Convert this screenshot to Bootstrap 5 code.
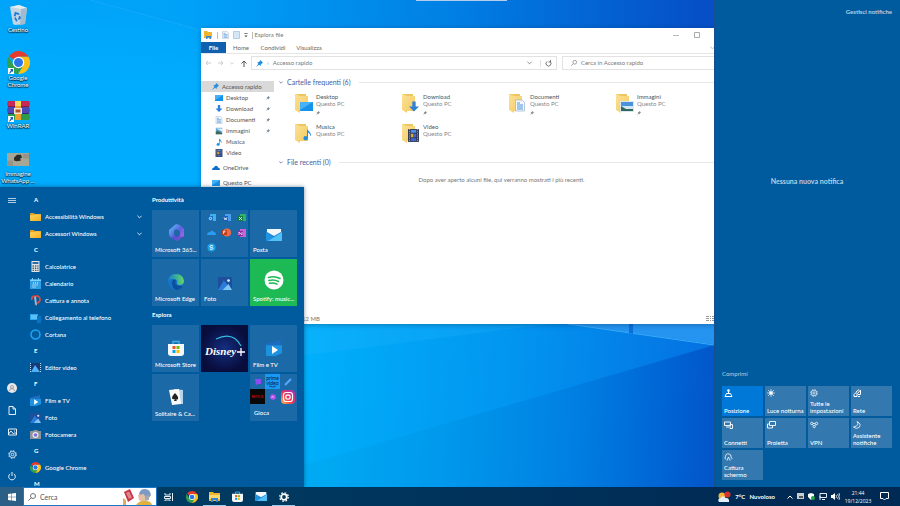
<!DOCTYPE html>
<html lang="it">
<head>
<meta charset="utf-8">
<meta name="viewport" content="width=device-width, initial-scale=1">
<title>Desktop</title>
<link href="https://cdn.jsdelivr.net/npm/bootstrap@5.3.0/dist/css/bootstrap.min.css" rel="stylesheet">
<style>
body{font-family:Lato,"Open Sans",sans-serif;font-size:6px;line-height:8px;color:#fff;background:#0a84e8}
svg{display:block;flex:none}
button,a,input{font:inherit;color:inherit}
button{background:none;border:0;padding:0;display:block}
a{text-decoration:none}
.screen{height:100vh;min-height:320px}
.paper{position:absolute;inset:0;width:100%;height:100%}
.strong{font-weight:700}
.medium{font-weight:500}
/* desktop icons */
.shortcuts{width:36px}
.shortcut{height:48px;padding-top:2px;line-height:7px;text-shadow:0 1px 1px #000,0 0 2px #024}
.pic{height:24px}
/* explorer window */
.explorer{position:absolute;left:201px;right:172px;top:28px;height:296px;background:#fff;color:#777;box-shadow:0 1px 5px #0245}
.titlebar{height:14px;padding-left:3px}
.vr-thin{width:1px;height:7px;background:#bbb}
.winbtn{width:21px}
.ribbon{height:12px;border-bottom:1px solid #e6e6e6;color:#666}
.ribbon button{width:32px}
.ribbon button.filetab{width:25px;background:#1060b0;color:#fff;margin-right:-1px}
.ribbon button.wide{width:40px}
.address{height:18px;padding:2px 0 2px 4px}
.navs{width:46px}
.boxed{border:1px solid #e2e2e2;height:14px}
.findbox{width:166px;margin-left:5px}
.findbox input,.seek input{border:0;background:none;outline:0;min-width:0;padding:0}
.findbox input::placeholder{color:#777;opacity:1}
.tree{width:73px;padding-top:9px;color:#555}
.tree a{height:11px;padding-left:14px;gap:3px}
.tree a.root{padding-left:11px}
.tree a.picked{background:#d9d9d9}
.gap-above{margin-top:4px}
.files{padding:4px 4px 0 5px}
.group{font-size:7px;line-height:12px;color:#4a5c9c}
.rule{height:1px;background:#e8e8e8}
.folders{display:grid;grid-template-columns:repeat(4,107px);grid-auto-rows:30px;padding:5px 0 0 15px;margin-bottom:3px}
.folders button{text-align:left;line-height:7px;color:#888}
.folders b{font-weight:400;color:#48565e}
.status{height:11px;padding:0 14px 0 101px}
/* start menu */
.start{position:absolute;left:0;bottom:0;width:304px;height:300px;background:#005a9e;overflow:hidden;box-shadow:0 0 4px #0248}
.rail{width:24px;padding:8px 0 6px}
.rail button{height:10px}
.rail-low{gap:12px}
.apps{width:122px;padding:5px 4px 0 6px;height:300px;overflow:hidden}
.apps h3{font-size:6px;line-height:16px;margin:0;padding-left:4px;font-weight:700}
.apps button{height:17px;width:100%;gap:4px;text-align:left}
.tiles{padding:9px 0 0 6px}
.tiles h2{font-size:6px;line-height:8px;margin:0;font-weight:700}
.board{display:grid;grid-template-columns:repeat(3,47px);grid-auto-rows:47px;gap:2px;padding:6px 0 5px}
.tile{position:relative;background:#1c69a8;text-align:left;display:flex;flex-direction:column;align-items:center;justify-content:flex-end;padding:0 2px 3px 3px;white-space:nowrap}
.tile span{width:100%;display:block;overflow:hidden}
.tile .art{margin-bottom:5px}
.tile.green{background:#1db954}
.minis{display:grid;grid-template-columns:repeat(3,15px);grid-auto-rows:15px;justify-items:center;align-items:center;width:100%}
/* notification panel */
.centre{position:absolute;right:0;top:0;bottom:0;width:186px;background:#005a9e;border-left:1px solid #16508c;padding:8px 8px 7px 7px;color:#b9d0e4}
.nothing{padding-bottom:24px}
.nothing p{font-size:7px}
.quick{display:grid;grid-template-columns:repeat(4,1fr);grid-auto-rows:30px;gap:2px;color:#fff}
.quick button{background:#3378af;text-align:left;display:flex;flex-direction:column;justify-content:space-between;padding:3px 0 2px 2px;line-height:7px}
.quick button.on{background:#0078d7}
/* taskbar */
.bar{height:19px;background:linear-gradient(90deg,#003a60 25%,#002a54 85%)}
.winkey{width:23px;background:#2c5f85}
.seek{width:134px;background:#fff;border:1px solid #1d78c8;color:#666;font-size:7px}
.seek input::placeholder{color:#555;opacity:1}
.task{width:23px}
.task.open{box-shadow:inset 0 -1px #9cc9ee}
.tray{gap:4px;padding-right:11px}
.clock{width:28px;font-family:"Open Sans",sans-serif;font-size:5px}
.handle{position:absolute;left:46.2%;top:0;width:91px;height:1px;background:#b4cdec}
</style>
<script src="https://cdn.jsdelivr.net/npm/bootstrap@5.3.0/dist/js/bootstrap.bundle.min.js"></script>
</head>
<body class="overflow-hidden">
<svg width="0" height="0" class="position-absolute" aria-hidden="true">
<defs>
<linearGradient id="fg" x2="1" y2="1"><stop stop-color="#ffd75e"/><stop offset="1" stop-color="#f2ae22"/></linearGradient>
<linearGradient id="pg" x2="1" y2="1"><stop stop-color="#fbe296"/><stop offset="1" stop-color="#f3c95f"/></linearGradient>
<linearGradient id="mg" x2="1" y2="1"><stop stop-color="#5ad0f6"/><stop offset=".5" stop-color="#5b62e0"/><stop offset="1" stop-color="#c867d8"/></linearGradient>
<linearGradient id="eg" x2="1" y2="0"><stop stop-color="#1580d0"/><stop offset="1" stop-color="#62d860"/></linearGradient>
<linearGradient id="ig" y1="1" x2="1" y2="0"><stop stop-color="#fec34a"/><stop offset=".45" stop-color="#f0345a"/><stop offset="1" stop-color="#9a36c8"/></linearGradient>
<radialGradient id="dg"><stop stop-color="#142e80"/><stop offset="1" stop-color="#080d3c"/></radialGradient>
<symbol id="chrome" viewBox="0 0 24 24"><path fill="#e33b2e" d="M12 12 2 5.500A12 12 0 0 1 22.400 6H12z"/><path fill="#fbc116" d="M12 6h10.400A12 12 0 0 1 11.500 24L17 15z"/><path fill="#2fa04e" d="M1.600 6A12 12 0 0 0 11.500 24L17 15l-5-3-5.200 3z"/><circle cx="12" cy="12" r="6" fill="#fff"/><circle cx="12" cy="12" r="4.700" fill="#2b75e8"/></symbol>
<symbol id="folder" viewBox="0 0 12 10"><path fill="#e8a21c" d="M0 1h4l1.500 1.500H12V9H0z"/><path fill="url(#fg)" d="M0 3.500h4.500L6 2.500h6V10H0z"/></symbol>
<symbol id="bigfolder" viewBox="0 0 20 20"><path fill="#eec660" d="M1 1h11v15H1z"/><path fill="url(#pg)" d="M1 1l5 2h8v15H6v2l-5-3z"/></symbol>
<symbol id="pin" viewBox="0 0 8 8"><path fill="currentColor" d="M5 0l3 3-1 .6L5.500 5l-.2 1.800L3.600 5.300 0 8l2.700-3.600L1.200 2.800 3 2.500 4.500 1z"/></symbol>
<symbol id="photo" viewBox="0 0 12 11" preserveAspectRatio="none"><path fill="#1d4f9c" d="M0 0h12v10H0z"/><path fill="#2b7bd8" d="M0 11l5-8 7 8z"/><path fill="#7cc6f6" d="M4 11l5-5 3 5z"/><circle cx="9" cy="3" r="1.200" fill="#cfeaff"/></symbol>
<symbol id="film" viewBox="0 0 12 12"><path fill="#1d6cc0" d="M0 3l11-3v4l-11 3z"/><path fill="#1d92e0" d="M0 4h12v6l-5 2H0z"/><path fill="#fff" d="M4.500 4.500v6L9 7.500z"/></symbol>
<symbol id="cap" viewBox="0 0 10 10"><path fill="#5b9edb" d="M1 1h8v8H1z"/><path fill="#e8f2fa" d="M1 2h8v4L6 4z"/><path fill="#3b6a55" d="M1 6l3-1 5 3v1H1z"/></symbol>
<symbol id="note" viewBox="0 0 10 12"><path fill="#1e8fe0" d="M5 0c0 2 4 3 4 7H8c0-2-1-2.500-2-3v5.500A2.300 2 0 1 1 5 8z"/></symbol>
<symbol id="strip" viewBox="0 0 12 14"><path fill="#2f3550" d="M0 0h12v14H0z"/><path fill="#4b90e8" d="M3 1h6v3H3z"/><path fill="#d7a83c" d="M3 5h3v4H3z"/><path fill="#3e68d0" d="M6 5h3v4H6zM3 10h6v3H3z"/><path stroke="#b9bfd0" stroke-dasharray="1 1" d="M1.500 0v14M10.500 0v14"/></symbol>
<symbol id="doc" viewBox="0 0 10 12"><path fill="#f4f8fc" stroke="#9ab2c8" stroke-width=".7" d="M.5.5h6.500L9.500 3v8.500h-9z"/><path stroke="#4d93d9" d="M2 3.500h3M2 5.500h6M2 7.500h6M2 9.500h6"/></symbol>
<symbol id="down" viewBox="0 0 12 12"><path fill="#2f80d8" d="M4 0h4v6h4l-6 6-6-6h4z"/></symbol>
<symbol id="mon" viewBox="0 0 12 9" preserveAspectRatio="none"><path fill="#1593ea" d="M0 0h12v9H0z"/><path fill="#45b2f8" d="M0 0h12L0 8z"/></symbol>
<symbol id="gear" viewBox="0 0 12 12"><g fill="none" stroke="currentColor"><circle cx="6" cy="6" r="1.700"/><circle cx="6" cy="6" r="4.200"/><circle cx="6" cy="6" r="5.200" stroke-dasharray="2 2.080"/></g></symbol>
<symbol id="bag" viewBox="0 0 16 16"><path fill="none" stroke="#3fb3ee" stroke-width="1.300" d="M5 4V1.500h6V4"/><path fill="#f4f8fb" d="M0 4h16v9q0 3-3 3H3q-3 0-3-3z"/><path fill="#f25022" d="M4.500 6H7.500V9H4.500z"/><path fill="#7fba00" d="M8.500 6h3v3h-3z"/><path fill="#00a4ef" d="M4.500 10h3v3h-3z"/><path fill="#ffb900" d="M8.500 10h3v3h-3z"/></symbol>
<symbol id="mail" viewBox="0 0 16 12"><path fill="#1a7fd0" d="M0 2h16v10H0z"/><path fill="#f4f8fb" d="M1 0h14v3L8 7 1 3z"/><path fill="#1f93e2" d="M0 12V3l8 5-5 4z"/><path fill="#4fc1f8" d="M16 12V3L2 12z"/></symbol>
<symbol id="glass" viewBox="0 0 8 8"><g fill="none" stroke="currentColor" stroke-width=".9"><circle cx="5" cy="3" r="2.500"/><path d="M3.200 4.800.3 7.700"/></g></symbol>
<symbol id="chev" viewBox="0 0 6 4"><path fill="none" stroke="currentColor" d="M.5.5 3 3 5.500.5"/></symbol>
</defs>
</svg>

<div class="screen d-flex flex-column">
<main class="position-relative flex-grow-1 overflow-hidden">
  <svg class="paper" viewBox="0 0 900 487" preserveAspectRatio="none" aria-hidden="true">
    <defs>
      <linearGradient id="w1"><stop stop-color="#00a4f8"/><stop offset=".2" stop-color="#00a2f8"/><stop offset=".5" stop-color="#0080e4"/><stop offset=".78" stop-color="#064fc6"/></linearGradient>
      <linearGradient id="w2" x2="0" y2="1"><stop stop-color="#00b0ff" stop-opacity="0"/><stop offset=".5" stop-color="#00acfe"/></linearGradient>
      <linearGradient id="w3" gradientUnits="userSpaceOnUse" x1="304" y1="340" x2="714" y2="370"><stop stop-color="#00b0fb"/><stop offset=".5" stop-color="#0296f0"/><stop offset="1" stop-color="#0470e2"/></linearGradient>
      <linearGradient id="w4" gradientUnits="userSpaceOnUse" x1="304" y1="430" x2="714" y2="450"><stop stop-color="#00acf4"/><stop offset=".35" stop-color="#0098ec"/><stop offset=".65" stop-color="#0080e2"/><stop offset=".88" stop-color="#0064d4"/><stop offset="1" stop-color="#0355c8"/></linearGradient>
    </defs>
    <path fill="url(#w1)" d="M0 0h900v487H0z"/>
    <path fill="url(#w2)" d="M0 0h90l114 31v160H0z"/>
    <path stroke="#32b2fb" stroke-opacity=".4" d="M90 0l114 31"/>
    <path fill="url(#w3)" d="M300 300h600v187H300z"/>
    <path fill="#2bb9ff" fill-opacity=".2" d="M300 356l250-32H300z"/>
    <path fill="#2494f0" d="M568 324h150v21z"/>
    <path stroke="#39aaf8" d="M568 324l146 21"/>
    <path fill="#0a6fd8" d="M629 324h4v10l-4-1z"/>
    <path fill="url(#w4)" d="M300 466l415-121v142H300z"/>
  </svg>
  <div class="handle"></div>

  <div class="shortcuts position-relative text-center">
    <a href="#" class="shortcut d-block"><span class="pic d-flex align-items-center justify-content-center"><svg width="19" height="21" viewBox="0 0 19 21"><path fill="#c3d5e2" d="M1 3l9-2 8 3-2 16-10 1-2-1z"/><path fill="#e2edf4" d="M1 3l9-2 8 3-6 1z"/><path fill="#a0bbd0" d="M12 5l6-1-2 16-5 1z"/><path fill="none" stroke="#1f7ad4" stroke-width="1.800" stroke-dasharray="4 1.500" d="M6.500 9l3 1 1.500 4-3.500 2.500-2-3.500z"/></svg></span>Cestino</a>
    <a href="#" class="shortcut d-block"><span class="pic d-flex align-items-center justify-content-center position-relative"><svg width="23" height="23"><use href="#chrome"/></svg><svg class="position-absolute bottom-0 start-0 ms-2" width="6" height="6" viewBox="0 0 6 6"><path fill="#fff" d="M0 0h6v6H0z"/><path fill="#1a5fb4" d="M2 1h3v3L4 3.200 2 5.500H1L3 2z"/></svg></span>Google Chrome</a>
    <a href="#" class="shortcut d-block"><span class="pic d-flex align-items-center justify-content-center position-relative"><svg width="23" height="19" viewBox="0 0 23 19"><path fill="#c42a55" d="M1 0h21l1 3-1 3H1L0 3z"/><path fill="#4b49b8" d="M1 6h21l1 3-1 4H1L0 9z"/><path fill="#2c9c4a" d="M1 13h21l1 3-1 3H1l-1-3z"/><path fill="#8c1b3c" d="M1 5h21v1H1z"/><path fill="#2f2c80" d="M1 12h21v1H1z"/><path fill="#f0a02c" d="M8 0h6v19H8z"/><path fill="#f8d860" d="M8 0h6v5H8z"/><path fill="#f4e4cc" d="M7 7h8v6H7z"/><path fill="#b0522c" d="M8.500 8.500h5v3h-5z"/></svg><svg class="position-absolute bottom-0 start-0 ms-2" width="6" height="6" viewBox="0 0 6 6"><path fill="#fff" d="M0 0h6v6H0z"/><path fill="#1a5fb4" d="M2 1h3v3L4 3.200 2 5.500H1L3 2z"/></svg></span>WinRAR</a>
    <a href="#" class="shortcut d-block"><span class="pic d-flex align-items-end justify-content-center pb-1"><svg width="22" height="13" viewBox="0 0 22 14" preserveAspectRatio="none"><path fill="#a7a594" d="M0 0h22v14H0z"/><path fill="#96948a" d="M0 8h6v6H0zM16 1h6v5h-6z"/><path fill="#2a2a28" d="M7 5l3-3 4 0 1 3-2 1 1 2-4 1-3-1z"/></svg></span>Immagine WhatsApp&nbsp;...</a>
  </div>

  <section class="explorer d-flex flex-column">
    <div class="titlebar d-flex align-items-center">
      <svg width="9" height="8" viewBox="0 0 9 8"><path fill="#f0b52c" d="M0 0h3l1 1h4v6H0z"/><path fill="#3584d8" d="M2 5h5v3H5.500V6.500h-2V8H2z"/></svg>
      <span class="vr-thin ms-1 me-1"></span>
      <svg width="7" height="8" class="me-1"><use href="#doc"/></svg>
      <svg width="7" height="8" viewBox="0 0 7 8" class="me-1"><path fill="#d5e6f6" stroke="#9bbbd8" stroke-width=".7" d="M.5.500h6v7h-6z"/></svg>
      <svg width="4" height="5" viewBox="0 0 4 6"><path fill="#555" d="M0 0h4v1H0zM0 3h4L2 5z"/></svg>
      <span class="vr-thin ms-1"></span>
      <span class="flex-grow-1">&nbsp;Esplora file</span>
      <button class="winbtn" aria-label="Riduci"><svg class="mx-auto" width="6" height="6"><path d="M0 3.500h6" stroke="#bbb"/></svg></button>
      <button class="winbtn" aria-label="Ingrandisci"><svg class="mx-auto" width="6" height="6"><path d="M.5.5h5v5h-5z" stroke="#aaa" fill="none"/></svg></button>
      <button class="winbtn" aria-label="Chiudi"><svg class="mx-auto" width="6" height="6"><path d="M0 0l6 6M6 0L0 6" stroke="#999"/></svg></button>
    </div>
    <nav class="ribbon d-flex">
      <button class="filetab strong">File</button><button>Home</button><button>Condividi</button><button class="wide">Visualizza</button>
      <button class="ms-auto" aria-label="Espandi"><svg class="mx-auto" width="5" height="4" color="#aaa"><use href="#chev"/></svg></button>
    </nav>
    <div class="address d-flex">
      <div class="navs d-flex align-items-center justify-content-between pe-1">
        <svg width="6" height="6"><path d="M6 3H1M3 1L1 3l2 2" stroke="#ccc" fill="none"/></svg>
        <svg width="6" height="6"><path d="M0 3h5M3 1l2 2-2 2" stroke="#ccc" fill="none"/></svg>
        <svg width="4" height="3" color="#bbb"><use href="#chev"/></svg>
        <svg width="6" height="7"><path d="M3 7V1M.5 3.500L3 1l2.500 2.500" stroke="#555" fill="none"/></svg>
      </div>
      <div class="boxed d-flex align-items-center flex-grow-1 ps-1 gap-1">
        <svg width="7" height="7" color="#1e8de0"><use href="#pin"/></svg><span>›</span><span class="flex-grow-1">Accesso rapido</span>
        <svg width="5" height="4" class="me-1"><use href="#chev"/></svg>
        <button class="border-start px-1" aria-label="Aggiorna"><svg width="7" height="7" viewBox="0 0 7 7"><path d="M2 1.500A2.500 2.500 0 1 0 5 1.500M5.500 0v2H3.500" stroke="#666" fill="none" stroke-width=".9"/></svg></button>
      </div>
      <label class="boxed findbox d-flex align-items-center ps-2 gap-1"><svg width="6" height="6"><use href="#glass"/></svg><input class="flex-grow-1" placeholder="Cerca in Accesso rapido" aria-label="Cerca in Accesso rapido"></label>
    </div>
    <div class="d-flex flex-grow-1">
      <nav class="tree d-flex flex-column">
        <a href="#" class="root picked d-flex align-items-center"><svg width="7" height="7" color="#2b8fe0"><use href="#pin"/></svg>Accesso rapido</a>
        <a href="#" class="d-flex align-items-center"><svg width="8" height="6"><use href="#mon"/></svg><span class="flex-grow-1">Desktop</span><svg class="me-1" width="4" height="4" color="#789"><use href="#pin"/></svg></a>
        <a href="#" class="d-flex align-items-center"><svg width="8" height="7"><use href="#down"/></svg><span class="flex-grow-1">Download</span><svg class="me-1" width="4" height="4" color="#789"><use href="#pin"/></svg></a>
        <a href="#" class="d-flex align-items-center"><svg width="8" height="8"><use href="#doc"/></svg><span class="flex-grow-1">Documenti</span><svg class="me-1" width="4" height="4" color="#789"><use href="#pin"/></svg></a>
        <a href="#" class="d-flex align-items-center"><svg width="8" height="8"><use href="#cap"/></svg><span class="flex-grow-1">Immagini</span><svg class="me-1" width="4" height="4" color="#789"><use href="#pin"/></svg></a>
        <a href="#" class="d-flex align-items-center"><svg width="8" height="8"><use href="#note"/></svg>Musica</a>
        <a href="#" class="d-flex align-items-center"><svg width="8" height="8"><use href="#strip"/></svg>Video</a>
        <a href="#" class="root gap-above d-flex align-items-center"><svg width="8" height="5" viewBox="0 0 8 5"><path fill="#0f6fc6" d="M0 5q0-2 2-2.400Q3 0 5 1q1 .5 1 1.500 2 0 2 2.500z"/></svg>OneDrive</a>
        <a href="#" class="root gap-above d-flex align-items-center"><svg width="8" height="6"><use href="#mon"/></svg>Questo PC</a>
      </nav>
      <div class="files flex-grow-1">
        <div class="group d-flex align-items-center"><svg class="me-1" width="4" height="3"><use href="#chev"/></svg>Cartelle frequenti (6)<span class="rule flex-grow-1 ms-2"></span></div>
        <div class="folders">
          <button class="d-flex"><svg width="22" height="22" viewBox="0 0 22 22"><use href="#bigfolder" width="20" height="20"/><use href="#mon" x="6" y="9" width="13" height="9"/></svg><span><b>Desktop</b><br>Questo PC<svg class="mt-1" width="4" height="4"><use href="#pin"/></svg></span></button>
          <button class="d-flex"><svg width="22" height="22" viewBox="0 0 22 22"><use href="#bigfolder" width="20" height="20"/><use href="#down" x="8" y="8" width="10" height="11"/></svg><span><b>Download</b><br>Questo PC<svg class="mt-1" width="4" height="4"><use href="#pin"/></svg></span></button>
          <button class="d-flex"><svg width="22" height="22" viewBox="0 0 22 22"><use href="#bigfolder" width="20" height="20"/><use href="#doc" x="7" y="6" width="10" height="13"/></svg><span><b>Documenti</b><br>Questo PC<svg class="mt-1" width="4" height="4"><use href="#pin"/></svg></span></button>
          <button class="d-flex"><svg width="22" height="22" viewBox="0 0 22 22"><use href="#bigfolder" width="20" height="20"/><path fill="#dfe6ea" d="M5 8h14v11H5z"/><path fill="#4a92dc" d="M6 9h12v5H6z"/><path fill="#cfe6f8" d="M6 13h12v2H6z"/><path fill="#2f6a60" d="M6 13l5 3h7v2H6z"/></svg><span><b>Immagini</b><br>Questo PC<svg class="mt-1" width="4" height="4"><use href="#pin"/></svg></span></button>
          <button class="d-flex"><svg width="22" height="22" viewBox="0 0 22 22"><use href="#bigfolder" width="20" height="20"/><use href="#note" x="8" y="4" width="10" height="15"/></svg><span><b>Musica</b><br>Questo PC</span></button>
          <button class="d-flex"><svg width="22" height="22" viewBox="0 0 22 22"><use href="#bigfolder" width="20" height="20"/><use href="#strip" x="7" y="6" width="11" height="13"/></svg><span><b>Video</b><br>Questo PC</span></button>
        </div>
        <div class="group d-flex align-items-center"><svg class="me-1" width="4" height="3"><use href="#chev"/></svg>File recenti (0)<span class="rule flex-grow-1 ms-2"></span></div>
        <p class="text-center mt-2 mb-0">Dopo aver aperto alcuni file, qui verranno mostrati i più recenti.</p>
      </div>
    </div>
    <div class="status d-flex align-items-center justify-content-between"><span>12 MB</span><svg width="8" height="6"><path d="M0 .500h3M0 2.500h3M0 4.500h3M4 .500h1M6 .500h2M4 2.500h1M6 2.500h2M4 4.500h1M6 4.500h2" stroke="#999"/></svg></div>
  </section>

  <section class="start d-flex">
    <div class="rail d-flex flex-column align-items-center">
      <button class="mb-auto" aria-label="Menu"><svg width="8" height="8"><path d="M0 2.500h8M0 4.500h8M0 6.500h8" stroke="#dbe8f3" stroke-width=".8"/></svg></button>
      <div class="d-grid rail-low">
        <button aria-label="Account"><svg width="10" height="10" viewBox="0 0 10 10"><circle cx="5" cy="5" r="5" fill="#e8e8e8"/><circle cx="5" cy="4" r="1.500" fill="none" stroke="#888" stroke-width=".7"/><path d="M2.500 8q0-2.500 2.500-2.500T7.500 8" fill="none" stroke="#888" stroke-width=".7"/></svg></button>
        <button aria-label="Documenti"><svg class="mx-auto" width="8" height="9"><path d="M1 .5h4L7.500 3v5.500H1zM5 .5V3h2.500" fill="none" stroke="#fff" stroke-width=".9"/></svg></button>
        <button aria-label="Immagini"><svg class="mx-auto" width="9" height="8"><path d="M.5 1h8v6h-8zM.5 6l2.500-3 2.500 3 1.500-1.500L8.500 6M6 3h1" fill="none" stroke="#fff" stroke-width=".9"/></svg></button>
        <button aria-label="Impostazioni"><svg class="mx-auto" width="9" height="9"><use href="#gear"/></svg></button>
        <button aria-label="Arresta"><svg class="mx-auto" width="8" height="9"><path d="M4 0v4M2.200 1.800a3.300 3.300 0 1 0 3.600 0" fill="none" stroke="#fff" stroke-width=".9"/></svg></button>
      </div>
    </div>
    <div class="apps medium">
      <h3>A</h3>
      <button class="d-flex align-items-center"><svg width="11" height="9"><use href="#folder"/></svg><span class="flex-grow-1">Accessibilità Windows</span><svg width="5" height="4"><use href="#chev"/></svg></button>
      <button class="d-flex align-items-center"><svg width="11" height="9"><use href="#folder"/></svg><span class="flex-grow-1">Accessori Windows</span><svg width="5" height="4"><use href="#chev"/></svg></button>
      <h3>C</h3>
      <button class="d-flex align-items-center"><svg width="11" height="11" viewBox="0 0 11 11"><path fill="#dfe6ea" d="M1.500 0h8v11h-8z"/><path fill="#2a6ea8" d="M2.500 1h6v2h-6z"/><path stroke="#4a5a66" stroke-width="1.400" stroke-dasharray="1.400 1" d="M2.500 5h6M2.500 7.200h6M2.500 9.400h6"/></svg>Calcolatrice</button>
      <button class="d-flex align-items-center"><svg width="11" height="11" viewBox="0 0 11 11"><path fill="#2f9fe6" d="M0 1.500h11V11H0z"/><path fill="#7fd0fa" d="M2 0h1v2H2zM8 0h1v2H8zM0 1.500h11V3H0z"/><path stroke="#fff" stroke-dasharray="1 1" d="M3 5h5.500M2.500 7h6M2.500 9h4"/></svg>Calendario</button>
      <button class="d-flex align-items-center"><svg width="11" height="11" viewBox="0 0 11 11"><path fill="none" stroke="#e2483d" stroke-width="1.700" d="M6 1a3.500 3.500 0 0 1 1 7L5 10M5 1Q1 1 2 5"/><path fill="#9fb9cf" d="M4 2l2-1 1 10-2-2z"/></svg>Cattura e annota</button>
      <button class="d-flex align-items-center"><svg width="11" height="10" viewBox="0 0 11 10"><path fill="#2ea7ee" d="M0 1h8v6H0z"/><path fill="#0a74c4" d="M7 3h4v7H7z"/><path fill="#83dcff" d="M1 2h6v4H1z" opacity=".5"/></svg>Collegamento al telefono</button>
      <button class="d-flex align-items-center"><svg width="11" height="11"><circle cx="5.500" cy="5.500" r="4.500" fill="none" stroke="#1ca6f2" stroke-width="1.500"/></svg>Cortana</button>
      <h3>E</h3>
      <button class="d-flex align-items-center"><svg width="11" height="9" viewBox="0 0 11 9"><path fill="#153a78" d="M0 0h11v9H0z"/><path fill="#4fb0f4" d="M1 9l4-7 5 7z"/><path stroke="#bfe0fa" stroke-dasharray="1 1" d="M.5 0v9M10.500 0v9"/></svg>Editor video</button>
      <h3>F</h3>
      <button class="d-flex align-items-center"><svg width="11" height="11"><use href="#film"/></svg>Film e TV</button>
      <button class="d-flex align-items-center"><svg width="11" height="10"><use href="#photo"/></svg>Foto</button>
      <button class="d-flex align-items-center"><svg width="11" height="9" viewBox="0 0 11 9"><path fill="#8d949a" d="M0 1h3l1-1h3l1 1h3v8H0z"/><circle cx="5.500" cy="5" r="3" fill="#e8ecf0"/><circle cx="5.500" cy="5" r="1.800" fill="#7e6bd8"/></svg>Fotocamera</button>
      <h3>G</h3>
      <button class="d-flex align-items-center"><svg width="11" height="11"><use href="#chrome"/></svg>Google Chrome</button>
      <h3>M</h3>
    </div>
    <div class="tiles medium">
      <h2>Produttività</h2>
      <div class="board">
        <button class="tile"><svg class="art" width="15" height="17" viewBox="0 0 15 17"><path fill="url(#mg)" d="M7 0l4 1 4 4v7l-7 5-6-3-2-3V6z"/><path fill="#1c69a8" d="M7 5l4 2v4l-3 2-3-2V7z"/><path fill="#3f3fc0" d="M2 14l6-3 6 2-6 4z" opacity=".5"/></svg><span>Microsoft 365...</span></button>
        <button class="tile justify-content-start pt-0" aria-label="Office"><div class="minis">
          <svg width="8" height="8"><path fill="#42b0f0" d="M2 0h6v7H2z"/><path fill="#0f6cbd" d="M0 2h5v5H0z"/><circle cx="2.500" cy="4.500" r="1.200" fill="none" stroke="#fff" stroke-width=".8"/></svg>
          <svg width="8" height="8"><path fill="#4aa0ee" d="M2 0h6v7H2z"/><path fill="#185abd" d="M0 2h5v5H0z"/><path d="M1 3l.8 3 .7-2 .7 2L4 3" stroke="#fff" stroke-width=".6" fill="none"/></svg>
          <svg width="8" height="8"><path fill="#2fb36c" d="M2 0h6v7H2z"/><path fill="#107c41" d="M0 2h5v5H0z"/><path d="M1 3l3 3M4 3L1 6" stroke="#fff" stroke-width=".8"/></svg>
          <svg width="9" height="5"><path fill="#2a9cf0" d="M0 5Q0 2 3 2q2-3 4 0 2 0 2 3z"/></svg>
          <svg width="9" height="9"><circle cx="5" cy="4.500" r="4" fill="#ee6b47"/><path fill="#c43e1c" d="M0 2h5v5H0z"/><path d="M1.500 6V3h1.500q1 1-1.500 1.500" stroke="#fff" stroke-width=".7" fill="none"/></svg>
          <svg width="8" height="8"><path fill="#ca64d4" d="M2 0h6v8H2z"/><path fill="#8a2ba6" d="M0 2h5v5H0z"/><path d="M1 6V3l3 3V3" stroke="#fff" stroke-width=".7" fill="none"/></svg>
          <svg width="9" height="9"><circle cx="4.500" cy="4.500" r="4" fill="#1aa3ec"/><path d="M6 3q-3-1.500-3 .5 0 1 1.500 1T6 5.500Q6 7 3 6" stroke="#fff" fill="none"/></svg></div></button>
        <button class="tile"><svg class="art" width="16" height="12"><use href="#mail"/></svg><span>Posta</span></button>
        <button class="tile"><svg class="art" width="16" height="16" viewBox="0 0 16 16"><circle cx="8" cy="8" r="8" fill="#1474c8"/><path fill="url(#eg)" d="M0 7Q1 0 8 0q7 0 8 7 0 4-5 4-2 0-2-2 1-3-2-4-4-1-7 2z"/><path fill="#0c4f9c" d="M4 9q0-4 4-3-3 6 7 6-3 4-7 4Q4 14 4 9z"/></svg><span>Microsoft Edge</span></button>
        <button class="tile"><svg class="art" width="14" height="13"><use href="#photo"/></svg><span>Foto</span></button>
        <button class="tile green"><svg class="art" width="20" height="20"><circle cx="10" cy="10" r="9.500" fill="#fff"/><path d="M4.500 7.500q6-2 11.500 1M5 10.500q5-1.500 9.500 1M5.500 13.300q4-1 7.500.8" stroke="#1db954" stroke-width="1.600" fill="none" stroke-linecap="round"/></svg><span>Spotify: music...</span></button>
      </div>
      <h2>Esplora</h2>
      <div class="board">
        <button class="tile"><svg class="art" width="16" height="16"><use href="#bag"/></svg><span>Microsoft Store</span></button>
        <button class="tile p-0" aria-label="Disney+"><svg width="47" height="47" viewBox="0 0 47 47"><path fill="url(#dg)" d="M0 0h47v47H0z"/><path d="M15 14Q32 6 40 21" fill="none" stroke="#35bfe0" stroke-width="1.200"/><text x="4" y="30" font-family="Liberation Serif,serif" font-style="italic" font-weight="700" font-size="11" fill="#fff">Disney</text><path d="M40 23v8M36 27h8" stroke="#fff" stroke-width="1.300"/></svg></button>
        <button class="tile"><svg class="art" width="16" height="16"><use href="#film"/></svg><span>Film e TV</span></button>
        <button class="tile"><svg class="art" width="15" height="17" viewBox="0 0 15 17"><path fill="#b9d5ea" d="M5 1l9 1v14H5z"/><path fill="#f8fafc" d="M0 2l10-1 2 15-9 1z"/><path fill="#222" d="M6 5q4 4 3 6-1 1.500-2.500 0L8 13H5l.8-2Q3.500 12 3 10q0-2 3-5z"/></svg><span>Solitaire &amp; Ca...</span></button>
        <i></i>
        <button class="tile justify-content-between p-0"><div class="minis">
          <svg width="8" height="8"><path fill="#8d4cf2" d="M1 1h6v5H4L2 7z"/></svg>
          <svg width="15" height="15" viewBox="0 0 15 15"><path fill="#1a98f8" d="M0 0h15v15H0z"/><text x="7.500" y="6" text-anchor="middle" font-size="5" fill="#06263f">prime</text><text x="7.500" y="11" text-anchor="middle" font-size="5" fill="#06263f">video</text><path d="M4 12q4 2 7 0" stroke="#06263f" fill="none" stroke-width=".7"/></svg>
          <svg width="8" height="8"><path d="M1 7l6-6" stroke="#58a8ff" stroke-width="2"/></svg>
          <svg width="15" height="15" viewBox="0 0 15 15"><path fill="#080808" d="M0 0h15v15H0z"/><text x="7.500" y="9" text-anchor="middle" font-size="3" fill="#e50914">NETFLIX</text></svg>
          <svg width="8" height="8"><circle cx="4" cy="4" r="2.800" fill="#b850f0"/><path d="M2.500 4.500L4 3.500l1 1" stroke="#fff" fill="none" stroke-width=".7"/></svg>
          <svg width="14" height="14" viewBox="0 0 14 14"><rect width="14" height="14" rx="4" fill="url(#ig)"/><g fill="none" stroke="#fff" stroke-width="1.200"><rect x="2.500" y="2.500" width="9" height="9" rx="2.500"/><circle cx="7" cy="7" r="2.200"/></g></svg></div><span class="ps-1 pb-1">Gioca</span></button>
      </div>
    </div>
  </section>

  <aside class="centre d-flex flex-column">
    <a href="#" class="text-end strong">Gestisci notifiche</a>
    <div class="nothing flex-grow-1 d-flex align-items-center justify-content-center">
      <p class="strong m-0">Nessuna nuova notifica</p>
    </div>
    <a href="#" class="mb-2">Comprimi</a>
    <div class="quick medium">
      <button class="on"><svg width="9" height="8"><path d="M4.500 1v4M1 7.500l1.500-3h4l1.500 3z" stroke="#fff" fill="none"/><circle cx="4.500" cy="1.500" r="1.300" fill="#fff"/></svg>Posizione</button>
      <button><svg width="8" height="8"><circle cx="4" cy="4" r="1.800" fill="#fff"/><path d="M4 0v8M0 4h8M1 1l6 6M7 1L1 7" stroke="#fff" stroke-width=".6"/></svg>Luce notturna</button>
      <button><svg width="8" height="8"><use href="#gear"/></svg>Tutte le impostazioni</button>
      <button><svg width="9" height="8"><path d="M1 7.500V5.500l2-2 1 1v3zM3 3l3-2.500M4.500 4.500L7.500 1v4.500H5M5 7.500h2" stroke="#fff" fill="none"/></svg>Rete</button>
      <button><svg width="9" height="8"><path d="M.5 1h6v3.500h-6zM2 6h3M6 3.500h2.500v4H6z" stroke="#fff" fill="none" stroke-width=".9"/></svg>Connetti</button>
      <button><svg width="9" height="8"><path d="M2.500.5h6v4h-6zM2.500 3H.5v4h5V4.500" stroke="#fff" fill="none" stroke-width=".9"/></svg>Proietta</button>
      <button><svg width="9" height="8"><g stroke="#fff" fill="none" stroke-width=".8"><circle cx="1.800" cy="2.500" r="1.200"/><circle cx="6.500" cy="2.500" r="1.200"/><circle cx="4.200" cy="5.500" r="1.200"/><path d="M3 2.500h2M2.500 3.500l1 1M6 3.500l-1 1"/></g></svg>VPN</button>
      <button><svg width="8" height="8"><path d="M4 .5q3 4-3.500 5.500Q3 8.500 6 6.500 9 3 4 .5z" stroke="#fff" fill="none" stroke-width=".8"/></svg>Assistente notifiche</button>
      <button><svg width="9" height="8"><path d="M2 6.500Q0 5 1.500 3.500 2 0 5 1q2.500.5 2 3 2 1.500 0 2.500M3 7.500L4.500 4 6 7.500" stroke="#fff" fill="none" stroke-width=".8"/></svg>Cattura schermo</button>
    </div>
  </aside>
</main>

<footer class="bar d-flex align-items-stretch">
  <button class="winkey" aria-label="Start"><svg class="mx-auto" width="8" height="8" viewBox="0 0 8 8"><path fill="#fff" d="M0 1l3.500-.5v3.300H0zM4 .4L8 0v3.800H4zM0 4.300h3.500v3.200L0 7zM4 4.300h4V8l-4-.5z"/></svg></button>
  <label class="seek d-flex align-items-center ps-1 gap-1"><svg width="8" height="8"><use href="#glass"/></svg><input class="flex-grow-1" placeholder="Cerca" aria-label="Cerca">
    <svg width="34" height="17" viewBox="0 0 34 17"><path fill="#c8354a" d="M2 4l6-3 4 9-6 4z"/><path fill="#f4d8c8" d="M4 5l3-1.500 3 6-3 1.500z" opacity=".5"/><path fill="#e8a860" d="M1 10l3 2v5H1z"/><path fill="#7c9ac4" d="M17 6q1-5 6-5t6 6l-3 4-7-1z"/><path fill="#e6bfa0" d="M16 7l6-1 2 6-4 2-3-2z"/><path fill="#a4a8b0" d="M23 8l4-1v5l-4 1z"/><path fill="#e0b040" d="M14 17q4-5 10-4 5 0 6 4z"/></svg></label>
  <button class="task" aria-label="Visualizzazione attività"><svg class="mx-auto" width="9" height="8"><path d="M1 0v2h5V0M.5 3.500h6v2h-6zM1 8V7h5v1M8.500 0v8" stroke="#e8eef4" fill="none"/></svg></button>
  <button class="task" aria-label="Chrome"><svg class="mx-auto" width="12" height="12"><use href="#chrome"/></svg></button>
  <button class="task open" aria-label="Esplora file"><svg class="mx-auto" width="11" height="10" viewBox="0 0 11 10"><path fill="#f0b52c" d="M0 0h4l1 1h6v8H0z"/><path fill="#fbd970" d="M0 3h11v4H0z"/><path fill="#3584d8" d="M2 6h7v4H7V8H4v2H2z"/></svg></button>
  <button class="task" aria-label="Store"><svg class="mx-auto" width="11" height="11"><use href="#bag"/></svg></button>
  <button class="task" aria-label="Posta"><svg class="mx-auto" width="12" height="9"><use href="#mail"/></svg></button>
  <button class="task open" aria-label="Impostazioni"><svg class="mx-auto" width="10" height="10" viewBox="0 0 10 10"><circle cx="5" cy="5" r="2.800" fill="none" stroke="#fff" stroke-width="1.800"/><circle cx="5" cy="5" r="4.300" fill="none" stroke="#fff" stroke-width="1.200" stroke-dasharray="1.700 1.680"/></svg></button>
  <div class="tray ms-auto d-flex align-items-center">
    <button class="strong d-flex align-items-center gap-1 me-1"><svg width="13" height="12" viewBox="0 0 13 12"><circle cx="4" cy="5" r="3.500" fill="#f6b53a"/><path fill="#e6eef8" d="M1 11q-2-3 1.500-4 2-3.500 5 0 4-.5 3.500 4z"/><circle cx="9.500" cy="3.500" r="3" fill="#d8322c"/></svg>7°C&nbsp;&nbsp; Nuvoloso</button>
    <svg class="ms-1" width="6" height="4"><path d="M.5 3.500L3 1l2.500 2.500" stroke="#fff" fill="none"/></svg>
    <svg width="7" height="7"><path fill="#c8cdd2" d="M0 0h7v6H0z"/><path fill="#555" d="M2 3h4v2H2z"/></svg>
    <svg width="7" height="7"><path fill="#fff" d="M0 1l3-1 3 1v3L3 7 0 4z"/><circle cx="5" cy="5" r="2" fill="#22a344"/></svg>
    <svg width="8" height="7"><path d="M1 .5h6.500v4H1zM3 6.500h3M1 3v4" stroke="#fff" fill="none" stroke-width=".9"/></svg>
    <svg width="9" height="7"><path fill="#fff" d="M0 2h1.500L4 0v7L1.500 5H0z"/><path d="M5 2q1 1.500 0 3M6.500 1q2 2.500 0 5M8 0q2 3.500 0 7" stroke="#fff" fill="none" stroke-width=".7"/></svg>
    <div class="clock text-center"><div>21:44</div><div>19/12/2023</div></div>
    <button class="ms-1" aria-label="Notifiche"><svg width="9" height="9"><path d="M.5.500h8v6H6L4.500 8 3 6.500H.5z" stroke="#fff" fill="none"/></svg></button>
  </div>
</footer>
</div>
</body>
</html>
